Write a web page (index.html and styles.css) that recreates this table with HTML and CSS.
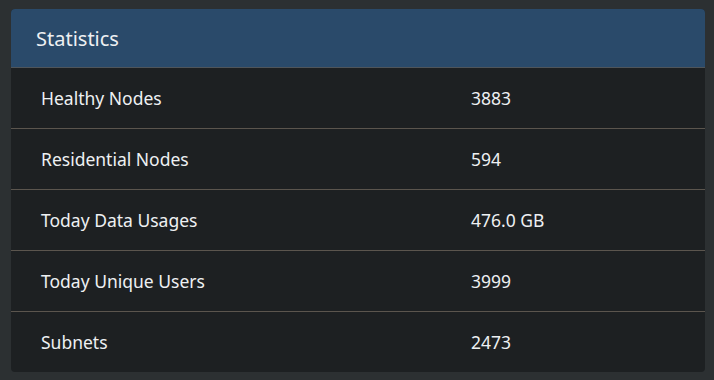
FILE: index.html
```html
<!DOCTYPE html>
<html lang="en">
<head>
<meta charset="utf-8">
<title>Statistics</title>
<link rel="stylesheet" href="styles.css">
</head>
<body>
<section class="card">
  <header class="card-header">Statistics</header>
  <div class="stats">
    <div class="row"><span class="label">Healthy Nodes</span><span class="value">3883</span></div>
    <div class="row"><span class="label">Residential Nodes</span><span class="value">594</span></div>
    <div class="row"><span class="label">Today Data Usages</span><span class="value">476.0 GB</span></div>
    <div class="row"><span class="label">Today Unique Users</span><span class="value">3999</span></div>
    <div class="row"><span class="label">Subnets</span><span class="value">2473</span></div>
  </div>
</section>
</body>
</html>
```
FILE: styles.css
```css
html, body {
  margin: 0;
  padding: 0;
}
body {
  background: #2c3032;
  font-family: "Noto Sans", "Open Sans", sans-serif;
  color: #eef0f2;
  padding: 9px 9px 9px 11px;
}
.card {
  width: 694px;
  background: #1d2022;
  border-radius: 4px;
  overflow: hidden;
}
.card-header {
  background: #2a4a6a;
  height: 58px;
  display: flex;
  align-items: center;
  padding-left: 25px;
  font-size: 20px;
  border-bottom: 1px solid #4f555a;
}
.row {
  display: grid;
  grid-template-columns: 430px 1fr;
  height: 60px;
  align-items: center;
  font-size: 17.5px;
  border-bottom: 1px solid #5b554e;
}
.row:last-child {
  border-bottom: none;
}
.label, .value {
  padding-left: 30px;
}
```
